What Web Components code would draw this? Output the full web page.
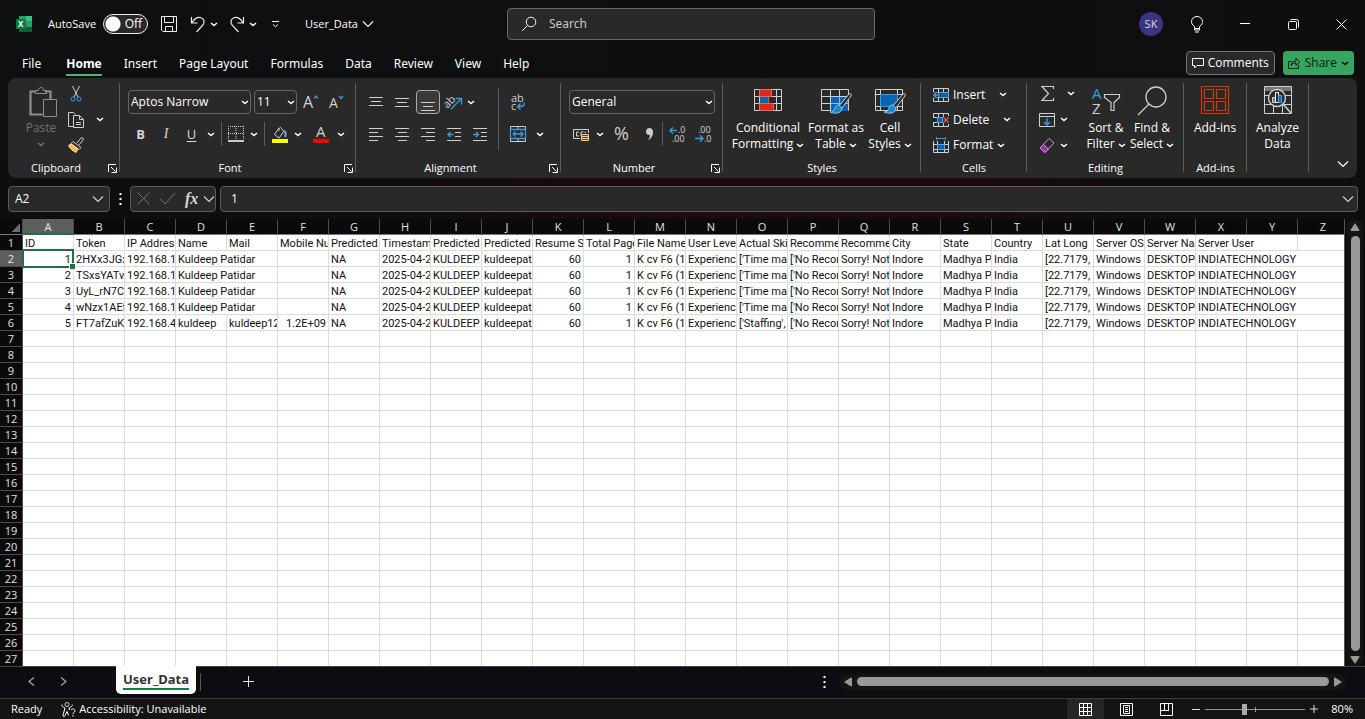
<!DOCTYPE html>
<html lang="en">
<head>
<meta charset="utf-8">
<title>User_Data - Excel</title>
<style>
html, body { height: 100%; margin: 0; }
body { background: #0e0e10; color: #fff; font: 12px/16px "Open Sans", "Noto Sans", sans-serif; overflow: hidden; }
</style>
</head>
<body>
<xl-app></xl-app>
<script>
const BASE = `
*, *::before, *::after { box-sizing: border-box; }
button { background: none; border: 0; margin: 0; padding: 0; color: inherit; font: inherit; display: inline-flex; align-items: center; justify-content: center; flex: none; white-space: nowrap; }
`;
function define(name, css, html, setup) {
  const tpl = document.createElement('template');
  tpl.innerHTML = `<style>${BASE}${css}</style>${html}`;
  customElements.define(name, class extends HTMLElement {
    constructor() {
      super();
      this.attachShadow({ mode: 'open' }).append(tpl.content.cloneNode(true));
    }
    connectedCallback() { if (setup) setup(this, this.shadowRoot); }
  });
}

const B = '#3a9ae0';
const lines = (rows) => rows.map(([a, b, y]) => `<path d="M${a} ${y}.5H${b}"/>`).join('');
const brush = `<path d="M29 8L19 20l2 3L31 10c1-2-1-3-2-2z" fill="#292929" stroke="#ccc"/><path d="M19 19c-4 0-4 3-5 5-1 2-3 2-4 2 4 2 12 2 12-4z" fill="#1c86d6" stroke="#8cc8f5"/>`;
/* name: [width, height, markup] */
const ICONS = {
  chev: [8, 5, `<path d="M1 1l3 2.600L7 1" stroke="#fff" stroke-width="1.500"/>`],
  chevBig: [12, 8, `<path d="M1 1.500l5 5 5-5" stroke-width="1.200"/>`],
  excel: [16, 16, `<g stroke="none"><path fill="#21a366" d="M3 0h7v5H3z"/><path fill="#33c481" d="M10 0h6v5h-6z"/><path fill="#107c41" d="M3 5h7v6H3z"/><path fill="#21a366" d="M10 5h6v6h-6z"/><path fill="#185c37" d="M3 11h13v5H3z"/><rect y="3" width="10" height="10" rx="1" fill="#107c41"/><text x="2" y="11" font-size="8" font-weight="700" fill="#fff">X</text></g>`],
  save: [16, 16, `<path d="M.5.5h15v15H2L.5 14z M3.500.5v6h9v-6 M4.500 15.500v-5h7v5"/>`],
  undo: [16, 17, `<path d="M1.500 1v6h6 M2 6.500C5 2 8 1 10.500 1.500c3.500.8 4.500 4.500 2.500 7.500L6.500 16" stroke-width="1.200"/>`],
  redo: [16, 17, `<path d="M14.500 1v6h-6 M14 6.500C11 2 8 1 5.500 1.500 2 2.300 1 6 3 9l6.500 7" stroke-width="1.200"/>`],
  custom: [9, 7, `<path d="M1 .5h7 M2 3.500l2.500 2.200L7 3.500" stroke="#fff"/>`],
  search: [16, 16, `<circle cx="10" cy="6" r="4.800"/><path d="M6.500 9.500L1 15"/>`],
  bulb: [12, 17, `<path d="M3.500 12.500v-2C.8 8.500.5 7 .5 5.500a5.500 5 0 0 1 11 0c0 1.500-.3 3-3 5v2z M3.500 12.500v1.500h5v-1.500 M4 16h4" stroke="#fff"/>`],
  min: [10, 2, `<path d="M0 .5h10" stroke="#fff"/>`],
  restore: [11, 11, `<path d="M.5 3.500q0-1 1-1h6q1 0 1 1v6q0 1-1 1h-6q-1 0-1-1z M2.500.5h6q2 0 2 2v6" stroke="#fff"/>`],
  close: [11, 11, `<path d="M.5.5l10 10 M10.500.5l-10 10" stroke="#fff"/>`],
  comment: [12, 11, `<path d="M.5.5h11v7H5l-2.500 2.500v-2.500h-2z" stroke="#fff"/>`],
  share: [13, 12, `<path d="M3.500 4.500h-3v7h10V8 M3 8.500c0-3 2-4.500 5-4.500V1l4 4-4 3.500V6C6 6 4 6.500 3 8.500z" stroke="#06200f"/>`],
  launch: [9, 9, `<path d="M.5 8V.5H8 M3 3l4.500 4.500 M8.500 3.500v5h-5" stroke="#fff"/>`],
  paste: [28, 31, `<g stroke="#8f8f8f"><path d="M7 4.500H1.500v23h12 M16 4.500h5.500V12" stroke-width="2.200"/><path d="M6.500 6.500v-3h3c0-4 5-4 5 0h3v3z"/><path d="M14.500 12.500h13v17h-13z" fill="#292929"/></g>`],
  cut: [12, 16, `<path d="M2.500 0l5.500 11 M9.500 0L4 11"/><g stroke="${B}"><circle cx="3" cy="13" r="2"/><circle cx="9" cy="13" r="2"/></g>`],
  copy: [17, 16, `<path d="M5.500 14.500h-5V.5h5l2 2 M5.500 3.500h6l4 4v8h-10z M11.500 3.500v4h4 M8 10.500h5 M8 12.500h5"/>`],
  painter: [16, 16, `<path d="M9 6l4-5c1-1 3 0 2 2l-4 5 M5 4.500l8 6-2 2-8-6z" fill="#292929"/><path d="M3 7l7 5-2 3.500C5 14 2 12 .5 8.500z" fill="#f0b858" stroke="#ffdb9c"/>`],
  growA: [17, 16, `<text x="1" y="14" font-size="16" class="t">A</text><path d="M12 4.500L14 2l2 2.500" stroke="${B}" stroke-width="1.300"/>`],
  shrinkA: [16, 16, `<text x="1" y="14" font-size="14" class="t">A</text><path d="M11 2l2 2.500L15 2" stroke="${B}" stroke-width="1.300"/>`],
  border: [16, 16, `<path d="M.5 0v14 M15.500 0v14 M8 0v14 M0 .5h16 M0 7.500h16" stroke-dasharray="1 1"/><path d="M0 15h16" stroke="#fff" stroke-width="1.600"/>`],
  fill: [16, 17, `<path d="M7 2L2.500 8.500 7 12l5-7-2-1.500c-1-3-3-3-3 1.500" /><path d="M11 5c3 0 3 3 2 6" stroke="#6aaede" stroke-width="2"/><path d="M0 15h16" stroke="#ff0" stroke-width="4"/>`],
  fontA: [16, 17, `<text x="3" y="11" font-size="15" class="t">A</text><path d="M0 15h16" stroke="#f00" stroke-width="4"/>`],
  alTop: [14, 17, lines([[0, 14, 3], [2, 12, 7], [0, 14, 11]])],
  alMid: [14, 17, lines([[0, 14, 4], [2, 12, 8], [0, 14, 12]])],
  alBot: [14, 17, lines([[0, 14, 8], [2, 12, 12], [0, 14, 16]])],
  orient: [18, 16, `<text x="-2" y="11" font-size="11" class="t" transform="rotate(-45 5 8)">ab</text><path d="M6 15L16 5 M10.500 4.500h6v6" stroke="${B}" stroke-width="1.400"/>`],
  left: [14, 14, lines([[0, 14, 1], [0, 9, 5], [0, 14, 9], [0, 9, 13]])],
  center: [14, 14, lines([[0, 14, 1], [3, 12, 5], [0, 14, 9], [3, 12, 13]])],
  right: [14, 14, lines([[0, 14, 1], [5, 14, 5], [0, 14, 9], [5, 14, 13]])],
  outdent: [14, 14, lines([[0, 14, 1], [8, 14, 5], [8, 14, 9], [0, 14, 13]]) + `<path d="M6.500 7.500H1 M3.500 5L1 7.500 3.500 10" stroke="${B}" stroke-width="1.400"/>`],
  indent: [14, 14, lines([[0, 14, 1], [8, 14, 5], [8, 14, 9], [0, 14, 13]]) + `<path d="M0 7.500h5.500 M3 5l2.500 2.500L3 10" stroke="${B}" stroke-width="1.400"/>`],
  wrap: [16, 17, `<text x="1" y="8" font-size="11" class="t">ab</text><text x="1" y="16" font-size="11" class="t">c</text><path d="M14 8.500c1 4-2 4-6 4 M10.500 9.500l-3 3 3 3" stroke="${B}" stroke-width="1.400"/>`],
  merge: [16, 16, `<path d="M.5.5h15v15H.5z M8 0v3 M8 13v3"/><path d="M.5 3.500h15v9H.5z M3 8h10 M5.500 5.500L3 8l2.500 2.500 M10.500 5.500L13 8l-2.500 2.500" stroke="${B}" stroke-width="1.300"/>`],
  money: [17, 15, `<path d="M7 11.500H.5v-9h15V6 M6 5H3.500v4H6 M8 9V5h2.500 M12 6V5h1"/><path d="M8.500 7.500h7v6h-7z" fill="#5a4522" stroke="#f5cf83"/><path d="M9 9.500h6 M9 11.500h6" stroke="#f5cf83"/>`],
  pct: [18, 18, `<text x="1" y="15" font-size="18" class="t">%</text>`],
  comma: [9, 14, `<path d="M4.500 1c2 0 3.500 1.500 3.500 4 0 4-2 7-5 8 1-1.500 2-3 2-5C2.500 8.500 1 7 1 4.500 1 2.500 2.500 1 4.500 1z" fill="#ccc" stroke="none"/>`],
  incDec: [17, 17, `<text x="9" y="7" font-size="9" class="t">.0</text><text x="3" y="16" font-size="9" class="t">.00</text><path d="M8 4.500H1 M4 1.500l-3 3 3 3" stroke="${B}" stroke-width="1.400"/>`],
  decDec: [17, 17, `<text x="3" y="7" font-size="9" class="t">.00</text><text x="9" y="16" font-size="9" class="t">.0</text><path d="M0 12.500h8 M5 9.500l3 3-3 3" stroke="${B}" stroke-width="1.400"/>`],
  cond: [28, 28, `<path d="M.5 3.500h27v21H.5z M5.500 3v22 M22.500 3v22 M14 3v22 M.5 10.500h27 M.5 17.500h27"/><path d="M5.500 3.500h12v7h-12z M5.500 17.500h14v7h-14z" fill="#d92b1c" stroke="#ff5b52"/><path d="M6 11h8v6H6z" fill="#0a64b4" stroke="none"/>`],
  table: [32, 32, `<path d="M1.500 3.500h27v21h-27z M10.500 3v22 M19.500 3v22 M1.500 10.500h27 M1.500 17.500h27"/><path d="M11 11h17v14H11z" fill="#0a64b4" stroke="none"/><path d="M10.500 17.500h18 M19.500 10.500v14" stroke="#7cc0f5"/>${brush}`],
  styles: [32, 32, `<path d="M1.500 3.500h27v21h-27z M6.500 3v22 M.5 8.500h28 M23.500 3v22 M1.500 20.500h27"/><path d="M6.500 8.500h17v12h-17z" fill="#0a64b4" stroke="#3a9ae0"/>${brush}`],
  insert: [16, 14, `<path d="M.5.5h15v13H.5z M.5 4.500h15 M.5 9.500h15 M5.500 0v14 M10.500 0v14"/><path d="M6 4.500h9.500v5H6z" fill="#0a64b4" stroke="#4ba8ea"/><path d="M8 7H0 M3.500 3.500L0 7l3.500 3.500" stroke="#292929" stroke-width="3"/><path d="M7 7H1 M3.500 4L.8 7l2.700 3" stroke="${B}" stroke-width="1.400"/>`],
  del: [16, 14, `<path d="M.5 4V.5h15V3 M.5 10v3.500h15V11 M5.500 0v4 M10.500 0v4 M5.500 10v4 M10.500 10v4 M0 4.500h4 M0 9.500h4"/><path d="M4.500 4.500h5v5h-5z" fill="#0a64b4" stroke="#4ba8ea"/><path d="M10.500 4.500l5 5 M15.500 4.500l-5 5" stroke="#e8584d" stroke-width="1.300"/>`],
  format: [16, 17, `<path d="M.5 4v11.500h15V4 M.5 7.500h15 M.5 12.500h15 M4.500 4v12 M11.500 4v12"/><path d="M4.500 7.500h7v5h-7z" fill="#0a64b4" stroke="#4ba8ea"/><path d="M3.500 1.500h9 M3.500 0v3 M12.500 0v3" stroke="${B}"/>`],
  sum: [13, 15, `<path d="M12.500 3V.5H1l6.500 7L1 14.500h11.500V12" stroke-width="1.200"/>`],
  down: [16, 14, `<path d="M.5.5h15v13H.5z M.5 3.500h15"/><path d="M8 5v6.500 M5 9l3 3 3-3" stroke="${B}" stroke-width="1.400"/>`],
  erase: [16, 16, `<path d="M10 1.500L15 6 6 15.500 1 11z" stroke="#d58ae0"/><path d="M4.500 7.500L9.500 12 6 15.500 1 11z" fill="#9b2fae" stroke="#d58ae0"/>`],
  sort: [30, 30, `<text x="1" y="13" font-size="15" class="t" style="fill:${B}">A</text><text x="1" y="28" font-size="15" class="t">Z</text><path d="M13.500 8.500h15v3l-5.500 5v8h-3v-8l-6.500-5z" stroke-width="1.200"/>`],
  find: [30, 30, `<circle cx="19" cy="11" r="10" stroke-width="1.300"/><path d="M12 18L1 29" stroke-width="1.300"/>`],
  addins: [28, 28, `<path d="M.5.5h27v27H.5z M3.500 3.500h9v9h-9z M15.500 3.500h9v9h-9z M3.500 15.500h9v9h-9z M15.500 15.500h9v9h-9z" stroke="#d83b01" stroke-width="1.200"/>`],
  analyze: [28, 28, `<path d="M.5.5h27v27H.5z M0 9.500h28 M0 18.500h28 M9.500 18v9 M18.500 18v9"/><path d="M1 1h26v4H1z" fill="#777" stroke="none"/><circle cx="13" cy="12" r="8.500" fill="#292929" stroke-width="1.400"/><path d="M19 18l8 9" stroke-width="1.600"/><path d="M8.500 11.500h3v5h-3z" fill="#777"/><path d="M11.500 6.500h3v10h-3z" fill="#292929" stroke="#fff"/><path d="M14.500 9.500h3v7h-3z" fill="#0a64b4" stroke="#4ba8ea"/>`],
  dots: [3, 12, `<path d="M1.500 0v12" stroke="#fff" stroke-width="2" stroke-dasharray="2 3"/>`],
  cross: [13, 13, `<path d="M.5.5l12 12 M12.500.5l-12 12" stroke="#777"/>`],
  check: [15, 13, `<path d="M0 7l5 5L15 1" stroke="#777"/>`],
  prev: [7, 9, `<path d="M6 .5l-5 4 5 4" stroke="#aaa" stroke-width="1.200"/>`],
  next: [7, 9, `<path d="M1 .5l5 4-5 4" stroke="#aaa" stroke-width="1.200"/>`],
  plus: [11, 11, `<path d="M5.500 0v11 M0 5.500h11" stroke="#e4e4e4"/>`],
  plusS: [8, 8, `<path d="M4 0v8 M0 4h8" stroke="#ddd"/>`],
  minusS: [8, 8, `<path d="M0 4.500h8" stroke="#ddd"/>`],
  a11y: [15, 15, `<circle cx="6" cy="2.500" r="2"/><path d="M1 2.500c-1 1 0 2 3 3.500l-2 7c0 2 1.500 2 2 .5L6 9.500l1.500 4 M11 2.500c1 1 0 2-3 3.500l.5 2 M10 8c1-2 4-1 4 .8 0 1.500-2 1.500-2 3.200 M12 13v1.500" stroke="#fff"/>`],
  normal: [13, 13, `<path d="M.5.5h12v12H.5z M4.500 0v13 M8.500 0v13 M0 4.500h13 M0 8.500h13" stroke="#fff"/>`],
  page: [13, 13, `<path d="M.5.5h12v12H.5z M3.500 2.500h6v8h-6z M5 4.500h3 M5 6.500h3 M5 8.500h3" stroke="#fff"/>`],
  breaks: [13, 13, `<path d="M.5.5h12v12H.5z M4.500 0v7 M8.500 0v7 M0 7.500h9" stroke="#fff"/>`],
  triU: [10, 8, `<path d="M5 0l4.500 7q0 1-1 1h-7q-1 0-1-1z" fill="#999" stroke="none"/>`],
  triD: [10, 8, `<path d="M5 8L.5 1q0-1 1-1h7q1 0 1 1z" fill="#999" stroke="none"/>`],
  triL: [8, 10, `<path d="M0 5L7 .5q1 0 1 1v7q0 1-1 1z" fill="#999" stroke="none"/>`],
  triR: [8, 10, `<path d="M8 5L1 .5q-1 0-1 1v7q0 1 1 1z" fill="#999" stroke="none"/>`],
};

define('xl-icon', `
:host { display: inline-flex; flex: none; color: #d0d0d0; }
svg { display: block; overflow: visible; fill: none; stroke: currentColor; }
text { stroke: none; fill: #fff; font-family: "Open Sans", sans-serif; }
.t { fill: #d0d0d0; }
`, '<span></span>', (el, root) => {
  const [w, h, body] = ICONS[el.getAttribute('name')];
  root.querySelector('span').innerHTML = `<svg width="${w}" height="${h}" viewBox="0 0 ${w} ${h}" aria-hidden="true">${body}</svg>`;
});
const ic = (n) => `<xl-icon name="${n}"></xl-icon>`;
const btn = (n, label, cls = '') => `<button type="button" class="${cls}" aria-label="${label}">${ic(n)}</button>`;

define('xl-title-bar', `
:host { display: grid; grid-template-columns: 507fr 368fr 490fr; align-items: center; height: 48px; flex: none; font-size: 11px; }
xl-icon { color: #f0f0f0; }
.left { display: flex; align-items: center; padding-left: 16px; }
.auto { display: flex; align-items: center; gap: 7px; margin: 0 13px 0 16px; }
.switch { position: relative; display: inline-flex; width: 45px; height: 20px; }
.switch input { appearance: none; margin: 0; width: 100%; height: 100%; border: 1px solid #eee; border-radius: 10px; background: radial-gradient(circle at 9px 9px, #fff 7px, #292929 8px); }
.switch span { position: absolute; right: 6px; top: 2px; font-size: 12px; }
.c { width: 16px; margin-right: 7px; } .q { width: 22px; margin: 0 19px 0 -4px; }
.name { gap: 4px; }
.search { display: flex; align-items: center; gap: 12px; height: 32px; padding: 0 13px; background: #292929; border: 1px solid #6a6a6a; border-radius: 4px; }
input[type=search] { flex: 1; min-width: 0; background: none; border: 0; padding: 0; outline: 0; color: #fff; font: 12px/18px "Noto Sans", sans-serif; }
input::placeholder { color: #c8c8c8; opacity: 1; }
.right { display: flex; justify-content: flex-end; align-items: center; }
.right button { width: 48px; height: 32px; }
.right .avatar { width: 44px; }
.avatar span { width: 24px; height: 24px; border-radius: 50%; background: #3b3480; color: #ddd; font-size: 11px; line-height: 24px; }
.s { margin-right: 13px; }
`, `
<div class="left">${ic('excel')}
<label class="auto">AutoSave<span class="switch"><input type="checkbox" role="switch"><span>Off</span></span></label>
${btn('save', 'Save', 's')}${btn('undo', 'Undo')}${btn('chev', 'Undo list', 'c')}${btn('redo', 'Redo')}${btn('chev', 'Redo list', 'c')}
${btn('custom', 'Customize toolbar', 'q')}
<button type="button" class="name">User_Data ${ic('chevBig')}</button></div>
<label class="search">${ic('search')}<input type="search" placeholder="Search" aria-label="Search"></label>
<div class="right"><button type="button" class="avatar" aria-label="Account"><span>SK</span></button>${btn('bulb', 'Tips')}${btn('min', 'Minimize')}${btn('restore', 'Restore')}${btn('close', 'Close')}</div>`);

define('xl-tabs', `
:host { display: flex; align-items: center; justify-content: space-between; height: 30px; padding: 0 11px; flex: none; }
nav { display: flex; font-family: "Noto Sans", sans-serif; }
a { color: #fff; text-decoration: none; padding: 0 11px; line-height: 30px; height: 28px; }
a:first-child { padding-right: 14px; }
a.on span { display: block; font-weight: 700; height: 27px; border-bottom: 2px solid #4fb37c; border-radius: 1px; }
.acts { display: flex; gap: 8px; }
.acts button { height: 24px; border-radius: 4px; gap: 4px; padding: 0 5px; }
.acts .cm { border: 1px solid #757575; background: #292929; }
.acts .sh { background: #36a562; color: #06200f; }
.sh xl-icon:last-child { filter: brightness(0); }
`, `
<nav><a href="#file">File</a><a href="#home" class="on"><span>Home</span></a><a href="#insert">Insert</a><a href="#layout">Page Layout</a><a href="#formulas">Formulas</a><a href="#data">Data</a><a href="#review">Review</a><a href="#view">View</a><a href="#help">Help</a></nav>
<div class="acts"><button type="button" class="cm">${ic('comment')}Comments</button><button type="button" class="sh">${ic('share')}Share ${ic('chev')}</button></div>`);

define('xl-group', `
:host { display: flex; flex-direction: column; flex: none; width: var(--w); height: 100px; background: linear-gradient(#5c5c5c, #5c5c5c) no-repeat right 5px / 1px 89px; }
.body { flex: 1; display: flex; min-height: 0; }
.foot { display: flex; align-items: center; height: 20px; font-size: 11px; font-weight: 500; }
.foot span { flex: 1; text-align: center; }
button { width: 16px; height: 16px; }
`, `<div class="body"><slot></slot></div><div class="foot"><span></span></div>`, (el, root) => {
  root.querySelector('.foot span').textContent = el.getAttribute('label') || '';
  if (el.hasAttribute('launcher')) root.querySelector('.foot').insertAdjacentHTML('beforeend', btn('launch', el.getAttribute('label') + ' settings'));
});

define('xl-select', `
:host { position: relative; display: inline-block; flex: none; width: var(--w); height: 24px; }
select { appearance: none; width: 100%; height: 100%; background: #292929; border: 1px solid #666; border-radius: 4px; color: #fff; font: 12px/16px "Open Sans", sans-serif; padding: 0 12px 0 2px; outline: 0; }
xl-icon { position: absolute; right: 2px; top: 10px; pointer-events: none; }
`, `<select><option></option></select>${ic('chev')}`, (el, root) => {
  root.querySelector('option').textContent = el.getAttribute('value');
  root.querySelector('select').setAttribute('aria-label', el.getAttribute('label'));
});

define('xl-big-button', `
:host { display: block; flex: none; }
button { display: flex; flex-direction: column; justify-content: flex-start; width: var(--w); line-height: 16px; }
.pic { display: flex; height: 34px; align-items: flex-start; }
.txt { display: block; text-align: center; white-space: pre-line; }
.txt xl-icon { margin: 0 0 3px 3px; }
`, `<button type="button"><span class="pic"></span><span class="txt"><slot></slot></span></button>`, (el, root) => {
  root.querySelector('.pic').innerHTML = ic(el.getAttribute('icon'));
  if (el.hasAttribute('menu')) root.querySelector('.txt').insertAdjacentHTML('beforeend', ic('chev'));
});

define('xl-ribbon', `
:host { display: flex; height: 100px; margin: 0 8px; background: #292929; border-radius: 8px; flex: none; overflow: hidden; }
.rows { display: flex; flex-direction: column; gap: 8px; padding: 12px 0 0 8px; }
.row { display: flex; align-items: center; height: 24px; }
.rows button { width: 26px; height: 24px; }
.rows button.c { width: 14px; }
.line { display: grid; align-items: center; height: 24px; }
.line button, .line button.c { width: 100%; }
.font { grid-template-columns: 25px 26px 25px 14px 7px 22px 14px 7px 24px 12px 34px 6px; }
.num { grid-template-columns: 24px 13px 32px 23px 3px 26px 26px; }
.sep { width: 1px; height: 24px; background: #5c5c5c; justify-self: center; }
.tall { width: 1px; height: 61px; background: #5c5c5c; margin: 11px 6px 0 0; flex: none; }
.align { padding-left: 7px; width: 142px; flex: none; }
.rows button.on { width: 24px; border: 1px solid #aaa; border-radius: 4px; background: #3a3a3a; margin: 0 1px; }
.align button.c { margin-left: -3px; }
.t { font-size: 13px; color: #d6d6d6; } .b { font-weight: 700; } .i { font: italic 14px "Liberation Serif", serif; } .u { text-decoration: underline; text-underline-offset: 2px; }
.stack { display: flex; flex-direction: column; padding-top: 3px; }
.stack .row { height: 26px; }
.paste { flex-direction: column; justify-content: flex-start; width: 52px; padding-top: 9px; margin-left: 9px; color: #727272; }
.paste span { line-height: 16px; margin: 2px 4px 6px 0; } .paste xl-icon:last-child { margin-right: 4px; opacity: .35; }
.bigs { display: flex; padding-top: 8px; }
.cells { padding: 4px 0 0 12px; }
.cells .row { gap: 14px; }
.cells button { gap: 4px; }
.ed button { width: 24px; height: 24px; }
.ed button.c { width: 10px; }
.clip { margin-left: -5px; }
.more { margin: 78px 7px 0 auto; width: 14px; height: 16px; }
.more xl-icon { color: #fff; }
`, `
<xl-group label="Clipboard" launcher style="--w:112px">
 <button type="button" class="paste" disabled>${ic('paste')}<span>Paste</span>${ic('chev')}</button>
 <div class="stack ed clip"><div class="row">${btn('cut', 'Cut')}</div><div class="row">${btn('copy', 'Copy')}${btn('chev', 'Copy options')}</div><div class="row">${btn('painter', 'Format Painter')}</div></div>
</xl-group>
<xl-group label="Font" launcher style="--w:236px"><div class="rows">
 <div class="row" style="gap:3px"><xl-select style="--w:123px" value="Aptos Narrow" label="Font"></xl-select><span class="row"><xl-select style="--w:43px" value="11" label="Font size"></xl-select>${btn('growA', 'Increase font size')}${btn('shrinkA', 'Decrease font size')}</span></div>
 <div class="line font"><button type="button" class="t b">B</button><button type="button" class="t i">I</button><button type="button" class="t u">U</button>${btn('chev', 'Underline options', 'c')}<span class="sep"></span>${btn('border', 'Borders')}${btn('chev', 'Border options', 'c')}<span class="sep"></span>${btn('fill', 'Fill color')}${btn('chev', 'Fill options', 'c')}${btn('fontA', 'Font color')}${btn('chev', 'Font color options', 'c')}</div>
</div></xl-group>
<xl-group label="Alignment" launcher style="--w:205px"><div class="rows align">
 <div class="row">${btn('alTop', 'Top align')}${btn('alMid', 'Middle align')}${btn('alBot', 'Bottom align', 'on')}${btn('orient', 'Orientation')}${btn('chev', 'Orientation options', 'c')}</div>
 <div class="row">${btn('left', 'Align left')}${btn('center', 'Center')}${btn('right', 'Align right')}${btn('outdent', 'Decrease indent')}${btn('indent', 'Increase indent')}</div>
</div><span class="tall"></span><div class="rows" style="padding-left:0"><div class="row">${btn('wrap', 'Wrap text')}</div><div class="row" style="gap:2px">${btn('merge', 'Merge and center')}${btn('chev', 'Merge options', 'c')}</div></div></xl-group>
<xl-group label="Number" launcher style="--w:162px"><div class="rows">
 <div class="row"><xl-select style="--w:146px" value="General" label="Number format"></xl-select></div>
 <div class="line num">${btn('money', 'Accounting format')}${btn('chev', 'Accounting options', 'c')}${btn('pct', 'Percent')}${btn('comma', 'Comma style')}<span class="sep"></span>${btn('incDec', 'Increase decimal')}${btn('decDec', 'Decrease decimal')}</div>
</div></xl-group>
<xl-group label="Styles" style="--w:198px"><div class="bigs" style="padding-left:7px">
 <xl-big-button icon="cond" menu style="--w:76px">Conditional<br>Formatting</xl-big-button><xl-big-button icon="table" menu style="--w:60px">Format as<br>Table</xl-big-button><xl-big-button icon="styles" menu style="--w:48px">Cell<br>Styles</xl-big-button></div></xl-group>
<xl-group label="Cells" style="--w:106px"><div class="stack cells">
 <div class="row"><button type="button">${ic('insert')}Insert</button>${btn('chev', 'Insert options')}</div>
 <div class="row"><button type="button">${ic('del')}Delete</button>${btn('chev', 'Delete options')}</div>
 <div class="row"><button type="button">${ic('format')}Format ${ic('chev')}</button></div></div></xl-group>
<xl-group label="Editing" style="--w:157px"><div class="stack ed" style="padding-left:8px;width:58px">
 <div class="row">${btn('sum', 'AutoSum')}${btn('chev', 'AutoSum options')}</div>
 <div class="row">${btn('down', 'Fill')}${btn('chev', 'Fill options', 'c')}</div>
 <div class="row">${btn('erase', 'Clear')}${btn('chev', 'Clear options', 'c')}</div></div>
 <div class="bigs"><xl-big-button icon="sort" menu style="--w:42px">Sort &amp;<br>Filter</xl-big-button><xl-big-button icon="find" menu style="--w:50px">Find &amp;<br>Select</xl-big-button></div></xl-group>
<xl-group label="Add-ins" style="--w:63px"><div class="bigs"><xl-big-button icon="addins" style="--w:62px">Add-ins</xl-big-button></div></xl-group>
<xl-group style="--w:62px"><div class="bigs"><xl-big-button icon="analyze" style="--w:61px">Analyze<br>Data</xl-big-button></div></xl-group>
${btn('chevBig', 'Collapse ribbon', 'more')}`);

define('xl-formula-bar', `
:host { display: flex; align-items: center; height: 41px; padding: 0 7px 0 8px; flex: none; }
.box { display: flex; align-items: center; height: 26px; border: 1px solid #5c5c5c; border-radius: 4px; background: #292929; padding: 0 5px 0 6px; }
input { flex: 1; min-width: 0; width: 10px; background: none; border: 0; outline: 0; padding: 0; color: #fff; font: 12px/16px "Open Sans", sans-serif; }
.name { width: 102px; } .dots { width: 20px; }
.fx { width: 86px; margin-right: 4px; gap: 10px; padding: 0 0 0 6px; }
.fx i { font: italic 700 16px/20px "Liberation Serif", serif; color: #d6d6d6; }
.fx xl-icon:last-child { margin-left: -5px; }
.val { flex: 1; padding: 0 3px 0 10px; }
`, `
<div class="box name"><input aria-label="Name box" value="A2">${ic('chevBig')}</div>${btn('dots', 'Resize', 'dots')}
<div class="box fx">${ic('cross')}${ic('check')}<i>fx</i>${ic('chevBig')}</div>
<div class="box val"><input aria-label="Formula" value="1">${ic('chevBig')}</div>`);

const record = (id, token, ip, name, skills) => [id, token, ip, ...name, 'NA', '2025-04-2', 'KULDEEP I', 'kuldeepat', '60', '1', 'K cv F6 (1)', 'Experienc', skills, "['No Recor", 'Sorry! Not', 'Indore', 'Madhya Pr', 'India', "[22.7179, '", 'Windows 1', 'DESKTOP-', ['INDIATECHNOLOGY', 3]];
const KP = [['Kuldeep Patidar', 2], ''];
const ROWS = [
  ['ID', 'Token', 'IP Address', 'Name', 'Mail', 'Mobile Nu', 'Predicted', 'Timestamp', 'Predicted', 'Predicted', 'Resume Sc', 'Total Page', 'File Name', 'User Level', 'Actual Skil', 'Recomme', 'Recomme', 'City', 'State', 'Country', 'Lat Long', 'Server OS', 'Server Nar', ['Server User', 2], ''],
  record('1', '2HXx3JGx', '192.168.1', KP, "['Time mar"),
  record('2', 'TSxsYATvU', '192.168.1', KP, "['Time mar"),
  record('3', 'UyL_rN7C', '192.168.1', KP, "['Time mar"),
  record('4', 'wNzx1AEf', '192.168.1', KP, "['Time mar"),
  record('5', 'FT7afZuKa', '192.168.4', ['kuldeep', 'kuldeep12', '1.2E+09'], "['Staffing',"),
];
define('xl-grid', `
:host { display: block; flex: 1; min-width: 0; overflow: hidden; background: #fff; }
table { table-layout: fixed; width: 1349px; border-collapse: separate; border-spacing: 0; font: 11px/13px Roboto, sans-serif; color: #111; }
col.h { width: 23px; } col { width: 51px; }
th, td { height: 16px; padding: 0; overflow: hidden; white-space: nowrap; border: solid #dcdcdc; border-width: 0 1px 1px 0; }
td { padding: 2px 0 0 2px; text-align: left; }
td.n { text-align: right; padding-right: 2px; }
th { background: #0a0a0a; color: #e0e0e0; font: 11px/14px "Open Sans", sans-serif; padding-top: 1px; border-color: #4c4c4c; text-align: center; }
thead th { border-bottom-color: #7a7a7a; }
th.on { background: #5e5e5e; color: #e8e8e8; }
thead th.on { border-bottom: 2px solid #1e7145; line-height: 13px; }
th.corner { background: linear-gradient(135deg, transparent 50%, #6c6c6c 50%) no-repeat 12px 5px / 8px 8px #0a0a0a; }
td.sel { position: relative; overflow: visible; }
td.sel::before { content: ""; position: absolute; inset: -2px -1px; border: 2px solid #1e7145; }
td.sel::after { content: ""; position: absolute; right: -2px; bottom: -3px; width: 5px; height: 5px; background: #1e7145; box-shadow: -1px -1px #fff; }
`, `<table><colgroup></colgroup><thead></thead><tbody></tbody></table>`, (el, root) => {
  const letters = [...'ABCDEFGHIJKLMNOPQRSTUVWXYZ'];
  root.querySelector('colgroup').innerHTML = '<col class="h">' + '<col>'.repeat(26);
  root.querySelector('thead').innerHTML = '<tr><th class="corner"></th>' + letters.map((l) => `<th scope="col"${l === 'A' ? ' class="on"' : ''}>${l}</th>`).join('') + '</tr>';
  let html = '';
  for (let r = 1; r <= 27; r++) {
    const data = ROWS[r - 1] || [];
    html += `<tr><th scope="row"${r === 2 ? ' class="on"' : ''}>${r}</th>`;
    for (let c = 0, i = 0; c < 26; i++) {
      const [text, span] = Array.isArray(data[i]) ? data[i] : [data[i] || '', 1];
      const cls = [/^\d+$|E\+/.test(text) ? 'n' : '', r === 2 && c === 0 ? 'sel' : ''].join(' ').trim();
      html += `<td${cls ? ` class="${cls}"` : ''}${span > 1 ? ` colspan="${span}"` : ''}>${text}</td>`;
      c += span;
    }
    html += '</tr>';
  }
  root.querySelector('tbody').innerHTML = html;
});

define('xl-scroll-bar', `
:host { display: flex; align-items: center; justify-content: space-between; flex: none; background: #141414; border-radius: 8px; gap: 5px; }
:host([dir-y]) { flex-direction: column; width: 16px; margin: 0 2px; padding: 4px 0 2px; }
:host([dir-x]) { height: 16px; padding: 0 4px; }
.thumb { flex: 1; background: #999; border-radius: 5px; width: 9px; height: 9px; }
`, '', (el, root) => {
  const y = el.hasAttribute('dir-y');
  root.innerHTML += `${ic(y ? 'triU' : 'triL')}<div class="thumb"></div>${ic(y ? 'triD' : 'triR')}`;
});

define('xl-sheet-bar', `
:host { display: flex; height: 32px; flex: none; border-top: 1px solid #444; background: #0b0d11; align-items: center; padding: 0 19px 2px 15px; }
.nav { width: 32px; height: 28px; }
.tab { align-self: flex-start; background: #fff; color: #333; border-radius: 0 0 5px 5px; height: 28px; padding: 0 7px; margin: -1px 4px 0 37px; font: 700 13px/16px "Noto Sans", sans-serif; }
.tab span { height: 24px; line-height: 26px; border-bottom: 2px solid #107c41; align-self: flex-start; }
.sep { width: 1px; height: 18px; background: #555; }
.add { width: 94px; height: 28px; }
.dots { width: 32px; height: 28px; margin-left: auto; }
xl-scroll-bar { width: 38%; }
`, `
${btn('prev', 'Previous sheet', 'nav')}${btn('next', 'Next sheet', 'nav')}
<button type="button" class="tab"><span>User_Data</span></button><span class="sep"></span>${btn('plus', 'New sheet', 'add')}
${btn('dots', 'Resize tabs', 'dots')}<xl-scroll-bar dir-x></xl-scroll-bar>`);

define('xl-status-bar', `
:host { display: flex; align-items: center; height: 21px; flex: none; border-top: 1px solid #3c3c3c; background: #141414; padding: 0 12px 0 11px; font-size: 11px; font-weight: 500; }
.acc { gap: 3px; margin: 0 auto 0 19px; }
.v { width: 40px; height: 20px; } .v.on { width: 37px; background: #262626; margin-right: 2px; }
.z { width: 16px; height: 20px; }
.v + .z { margin-left: 2px; }
input { appearance: none; background: none; width: 100px; height: 16px; margin: 0 1px; }
input::-webkit-slider-runnable-track { height: 11px; background: linear-gradient(#999, #999) no-repeat 0 5px / 100% 1px, linear-gradient(#999, #999) no-repeat 50px 3px / 1px 5px; }
input::-webkit-slider-thumb { appearance: none; width: 5px; height: 11px; background: #aaa; }
.pct { margin-left: 9px; }
`, `
<span>Ready</span><button type="button" class="acc">${ic('a11y')}Accessibility: Unavailable</button>
${btn('normal', 'Normal', 'v on')}${btn('page', 'Page layout', 'v')}${btn('breaks', 'Page breaks', 'v')}
${btn('minusS', 'Zoom out', 'z')}<input type="range" min="0" max="100" value="39" aria-label="Zoom">${btn('plusS', 'Zoom in', 'z')}<button type="button" class="pct">80%</button>`);

define('xl-app', `
:host { display: flex; flex-direction: column; height: 100vh; background: linear-gradient(90deg, #0d0e10 25%, #1b0a10 45%, #1b0a10 70%, #0e0e11 85%) no-repeat 0 160px / 100% 60px, linear-gradient(90deg, #0e0f11, #100d10 60%, #0e0e11); }
.sheet { display: flex; flex: 1; min-height: 0; overflow: hidden; }
xl-grid { border-right: 1px solid #555; }
`, `<xl-title-bar></xl-title-bar><xl-tabs></xl-tabs><xl-ribbon></xl-ribbon><xl-formula-bar></xl-formula-bar>
<div class="sheet"><xl-grid></xl-grid><xl-scroll-bar dir-y></xl-scroll-bar></div>
<xl-sheet-bar></xl-sheet-bar><xl-status-bar></xl-status-bar>`);
</script>
</body>
</html>
